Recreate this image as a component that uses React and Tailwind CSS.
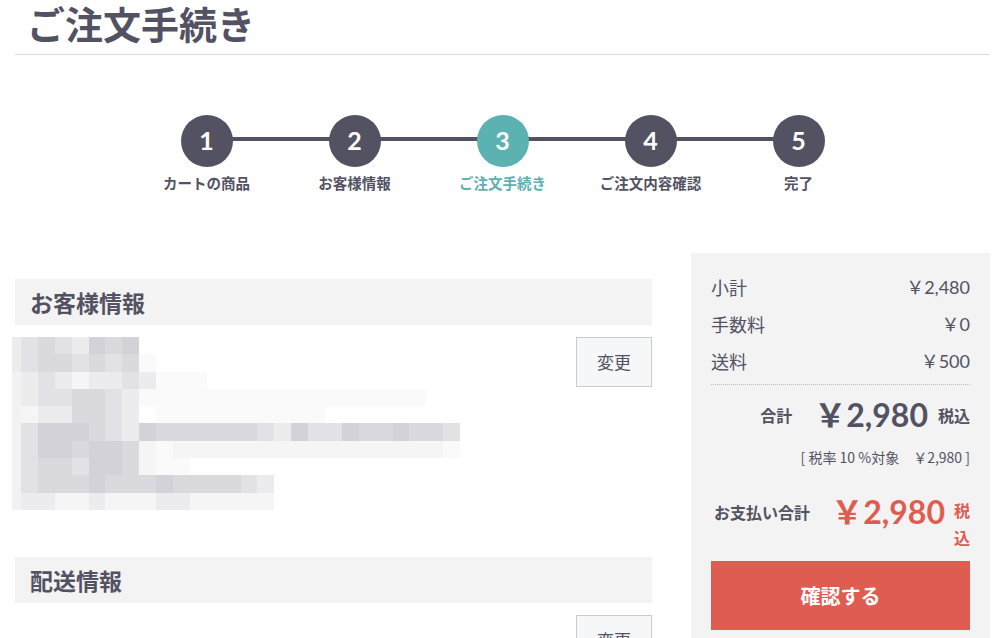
import React from 'react'

const font = { fontFamily: '"Noto Sans CJK JP", "Noto Sans", sans-serif' }
const num = { fontFamily: 'Lato, "Noto Sans CJK JP", sans-serif' }

const steps = [
  { n: 1, label: 'カートの商品' },
  { n: 2, label: 'お客様情報' },
  { n: 3, label: 'ご注文手続き', active: true },
  { n: 4, label: 'ご注文内容確認' },
  { n: 5, label: '完了' },
]

// pixelated (mosaic) personal info
const A = 'bg-[#d2d2d8]'
const B = 'bg-[#dadade]'
const C = 'bg-[#e2e2e6]'
const D = 'bg-[#ececee]'
const E = 'bg-[#f5f5f6]'
const F = 'bg-[#fafafa]'
const W = 'bg-white'

const mosaic = [
  [C, B, C, D, A, B, A, W],
  [C, B, B, C, B, C, B, F],
  [D, C, D, E, D, D, C, D, F, F, F],
  [D, C, C, B, B, C, D, F, F, F, F, F, F, F, F, F, F, F, F, F, F, F, F, F],
  [E, D, D, B, B, C, D, W, F, F, F, F, F, F, F, F, F, F],
  [C, A, A, A, B, C, D, A, B, B, B, B, B, B, C, D, A, C, C, A, B, B, A, B, B, C],
  [C, A, A, B, A, A, B, E, F, E, E, E, E, E, E, E, E, E, E, E, E, E, E, E, E, F],
  [C, B, B, C, A, A, B, E, F, F],
  [C, B, B, B, A, B, B, B, A, B, B, B, B, C, D],
  [D, D, E, E, D, E, E, E, D, D, E, E, E, E, E],
]

function Mosaic() {
  return (
    <div className="flex flex-col">
      {mosaic.map((row, i) => (
        <div key={i} className="flex h-[17.3px]">
          <div className={`w-[9px] ${i < 2 ? 'bg-[#ececee]' : 'bg-[#f2f2f3]'}`} />
          {row.map((c, j) => (
            <div key={j} className={`w-[16.9px] ${c}`} />
          ))}
        </div>
      ))}
    </div>
  )
}

function Stepper() {
  return (
    <div className="flex justify-center pt-[60px]">
      <div className="relative flex">
        <div className="absolute left-[74px] top-[22px] h-[4px] w-[592px] bg-[#525263]" />
        {steps.map((s) => (
          <div key={s.n} className="relative flex w-[148px] flex-col items-center">
            <div
              className={`flex h-[52px] w-[52px] items-center justify-center rounded-full text-[25px] font-bold text-white ${
                s.active ? 'bg-[#5cb1b1]' : 'bg-[#525263]'
              }`}
              style={num}
            >
              {s.n}
            </div>
            <p
              className={`mt-[6px] text-[14.5px] font-bold leading-[20px] ${
                s.active ? 'text-[#5cb1b1]' : 'text-[#525263]'
              }`}
            >
              {s.label}
            </p>
          </div>
        ))}
      </div>
    </div>
  )
}

function SectionHead({ children }) {
  return (
    <div className="flex h-[46px] items-center bg-[#f3f3f3] px-[15px]">
      <h2 className="text-[23px] font-bold leading-[30px] text-[#525263]">{children}</h2>
    </div>
  )
}

function ChangeButton() {
  return (
    <button
      type="button"
      className="h-[50px] w-[76px] border border-[#cccccc] bg-[#f5f7f8] text-[17px] text-[#525263]"
    >
      変更
    </button>
  )
}

function Summary() {
  return (
    <div className="bg-[#f3f3f3] px-[20px] pt-[16px] pb-[10px] text-[#525263]">
      <dl className="text-[18px] leading-[37px]">
        <div className="flex justify-between">
          <dt>小計</dt>
          <dd style={num}>￥2,480</dd>
        </div>
        <div className="flex justify-between">
          <dt>手数料</dt>
          <dd style={num}>￥0</dd>
        </div>
        <div className="flex justify-between">
          <dt>送料</dt>
          <dd style={num}>￥500</dd>
        </div>
      </dl>
      <div className="mt-[4px] border-t border-dotted border-[#bbbbbb]" />
      <div className="mt-[8px] flex items-center justify-end">
        <span className="mr-[22px] text-[16px] font-bold">合計</span>
        <span className="text-[32px] font-bold leading-[44px]" style={num}>
          ￥2,980
        </span>
        <span className="ml-[10px] text-[16px] font-bold">税込</span>
      </div>
      <p className="mt-[10px] text-right text-[14px] leading-[20px]">
        [ 税率 10 %対象　￥2,980 ]
      </p>
      <div className="mt-[21px] flex items-start justify-between">
        <span className="mt-[12px] pl-[3px] text-[16px] font-bold leading-[24px]">
          お支払い合計
        </span>
        <div className="flex items-start">
          <span className="text-[32px] font-bold leading-[48px] text-[#de5d50]" style={num}>
            ￥2,980
          </span>
          <span className="ml-[9px] mt-[9px] w-[16px] text-[16px] font-bold leading-[27px] text-[#de5d50]">
            税込
          </span>
        </div>
      </div>
      <button
        type="button"
        className="mt-[10px] h-[69px] w-full bg-[#de5d50] text-[20px] font-bold text-white"
      >
        確認する
      </button>
    </div>
  )
}

export default function App() {
  return (
    <div className="h-screen overflow-hidden bg-white pl-[15px] pr-[3px]" style={font}>
      <div className="border-b border-[#d9d9d9] pb-[8px] pl-[12px]">
        <h1 className="text-[38px] font-bold leading-[46px] text-[#525263]">ご注文手続き</h1>
      </div>
      <Stepper />
      <div className="mt-[60px] flex gap-[39px]">
        <div className="w-[637px] pt-[26px]">
          <SectionHead>お客様情報</SectionHead>
          <div className="flex justify-between pt-[12px]">
            <div className="-ml-[3px]">
              <Mosaic />
            </div>
            <ChangeButton />
          </div>
          <div className="mt-[47px]">
            <SectionHead>配送情報</SectionHead>
            <div className="flex justify-end pt-[12px]">
              <ChangeButton />
            </div>
          </div>
        </div>
        <div className="w-[299px]">
          <Summary />
        </div>
      </div>
    </div>
  )
}
